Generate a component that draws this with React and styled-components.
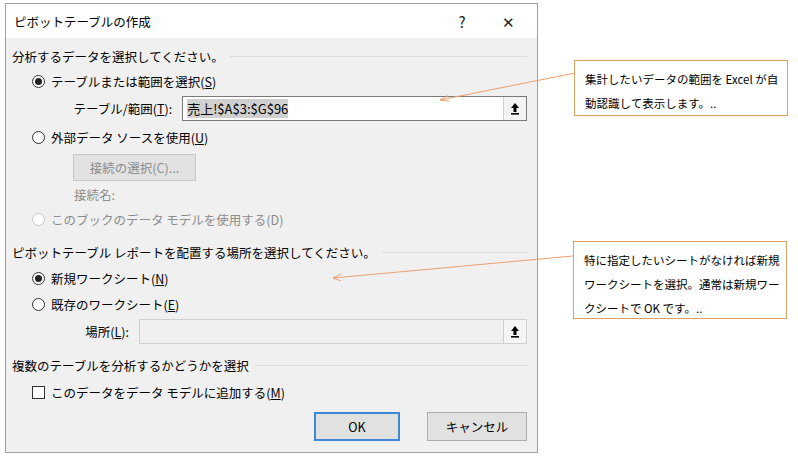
import React from "react";
import styled, { createGlobalStyle } from "styled-components";

const G = createGlobalStyle`
  body{margin:0;background:#fff;font-family:"Noto Sans CJK JP","Noto Sans",sans-serif;font-size:12.5px;color:#000;}
`;
const Page = styled.div`position:relative;width:798px;height:460px;padding:3px 0 0 5px;box-sizing:border-box;`;
const Dialog = styled.div`width:533px;height:450px;border:1px solid #a0a0a0;box-sizing:border-box;background:#f0f0f0;display:flex;flex-direction:column;`;
const Title = styled.div`height:34px;background:#fff;display:flex;align-items:center;padding-left:8px;font-size:12.5px;`;
const TitleText = styled.div`flex:1;`;
const TBtn = styled.div`width:46px;text-align:center;font-size:15px;color:#222;`;
const Body = styled.div`padding:6px 10px 0 6px;display:flex;flex-direction:column;`;
const Heading = styled.div`display:flex;align-items:center;gap:6px;height:24px;margin-top:${p=>p.mt||0}px;&::after{content:"";flex:1;border-top:1px solid #dcdcdc;}`;
const Row = styled.div`display:flex;align-items:center;height:${p=>p.h||25}px;padding-left:${p=>p.pl||0}px;color:${p=>p.dis?"#8c8c8c":"#000"};gap:6px;flex-shrink:0;`;
const Radio = styled.span`width:13px;height:13px;border-radius:50%;border:1px solid ${p=>p.dis?"#c8c8c8":"#333"};box-sizing:border-box;background:#fff;display:inline-flex;align-items:center;justify-content:center;
  &::after{content:"";width:7px;height:7px;border-radius:50%;background:${p=>p.on?"#222":"transparent"};}`;
const Check = styled.span`width:13px;height:13px;border:1px solid #333;background:#fff;box-sizing:border-box;`;
const Label = styled.span`width:${p=>p.w}px;text-align:right;margin-right:4px;`;
const Field = styled.div`display:flex;width:${p=>p.w}px;height:25px;border:1px solid ${p=>p.dis?"#d0d0d0":"#7a7a7a"};background:${p=>p.dis?"#f0f0f0":"#fff"};box-sizing:border-box;`;
const FText = styled.div`flex:1;display:flex;align-items:center;padding-left:4px;font-size:13px;`;
const Sel = styled.span`background:#d0d0d0;`;
const Pick = styled.div`width:22px;border-left:1px solid #d0d0d0;background:#f4f4f4;display:flex;align-items:center;justify-content:center;`;
const GrayBtn = styled.div`width:123px;height:27px;border:1px solid #c8c8c8;background:#e2e2e2;color:#8c8c8c;display:flex;align-items:center;justify-content:center;box-sizing:border-box;margin-left:61px;`;
const Footer = styled.div`display:flex;justify-content:flex-end;gap:27px;padding:5px 0 0;`;
const Btn = styled.div`width:${p=>p.w}px;height:29px;box-sizing:border-box;border:${p=>p.def?"2px solid #3c8ad7":"1px solid #adadad"};background:#e1e1e1;display:flex;align-items:center;justify-content:center;`;
const Callout = styled.div`position:absolute;left:${p=>p.x}px;top:${p=>p.y}px;width:${p=>p.w}px;height:${p=>p.h}px;border:1px solid #e0a060;background:#fff;box-sizing:border-box;padding:6px 6px 6px 10px;font-size:11.5px;line-height:24px;font-family:"Noto Sans CJK JP",sans-serif;`;
const Overlay = styled.svg`position:absolute;left:0;top:0;pointer-events:none;`;

const U = ({c}) => <u>{c}</u>;
const Up = () => (<svg width="10" height="13" viewBox="0 0 10 13"><path d="M5 1L1 6h2.5v4h3V6H9z" fill="#000"/><rect x="1" y="11" width="8" height="1.6" fill="#000"/></svg>);

export default function App(){
  return (<Page><G/>
    <Dialog>
      <Title><TitleText>ピボットテーブルの作成</TitleText><TBtn>?</TBtn><TBtn style={{marginRight:6}}>✕</TBtn></Title>
      <Body>
        <Heading>分析するデータを選択してください。</Heading>
        <Row h={26} pl={20}><Radio on/><span>テーブルまたは範囲を選択(<U c="S"/>)</span></Row>
        <Row h={28}><Label w={163}>テーブル/範囲(<U c="T"/>):</Label><Field w={351}><FText><Sel>売上!$A$3:$G$96</Sel></FText><Pick><Up/></Pick></Field></Row>
        <Row h={30} pl={20}><Radio/><span>外部データ ソースを使用(<U c="U"/>)</span></Row>
        <Row h={30}><GrayBtn>接続の選択(C)...</GrayBtn></Row>
        <Row dis h={24} pl={62}>接続名:</Row>
        <Row dis h={26} pl={20}><Radio dis/><span>このブックのデータ モデルを使用する(D)</span></Row>
        <Heading mt={8}>ピボットテーブル レポートを配置する場所を選択してください。</Heading>
        <Row h={28} pl={20}><Radio on/><span>新規ワークシート(<U c="N"/>)</span></Row>
        <Row h={24} pl={20}><Radio/><span>既存のワークシート(<U c="E"/>)</span></Row>
        <Row h={30}><Label w={119}>場所(<U c="L"/>):</Label><Field dis w={395}><FText/><Pick><Up/></Pick></Field></Row>
        <Heading mt={7}>複数のテーブルを分析するかどうかを選択</Heading>
        <Row h={30} pl={20}><Check/><span>このデータをデータ モデルに追加する(<U c="M"/>)</span></Row>
        <Footer><Btn def w={86}>OK</Btn><Btn w={100}>キャンセル</Btn></Footer>
      </Body>
    </Dialog>
    <Overlay width="798" height="460">
      <line x1="575" y1="73" x2="440" y2="100" stroke="#e8a070"/>
      <path d="M440 100l8-4.5M440 100l9 1" stroke="#e8a070"/>
      <line x1="573" y1="256" x2="333" y2="278" stroke="#e8a070"/>
      <path d="M333 278l8-4M333 278l8 3" stroke="#e8a070"/>
    </Overlay>
    <Callout x={574} y={60} w={214} h={56}>集計したいデータの範囲を Excel が自動認識して表示します。..</Callout>
    <Callout x={573} y={241} w={214} h={78}>特に指定したいシートがなければ新規ワークシートを選択。通常は新規ワークシートで OK です。..</Callout>
  </Page>);
}
